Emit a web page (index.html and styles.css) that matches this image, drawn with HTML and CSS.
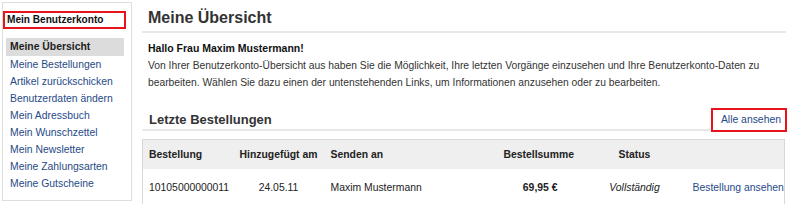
FILE: index.html
```html
<!DOCTYPE html>
<html lang="de">
<head>
    <meta charset="UTF-8">
    <title>Mein Benutzerkonto</title>
    <link rel="stylesheet" href="styles.css">
</head>
<body>

    <div class="page">
        <div class="sidebar">
            <div class="sidebar-title">Mein Benutzerkonto</div>
            <ul class="account-nav">
                <li class="active">Meine Übersicht</li>
                <li><a href="#">Meine Bestellungen</a></li>
                <li><a href="#">Artikel zurückschicken</a></li>
                <li><a href="#">Benutzerdaten ändern</a></li>
                <li><a href="#">Mein Adressbuch</a></li>
                <li><a href="#">Mein Wunschzettel</a></li>
                <li><a href="#">Mein Newsletter</a></li>
                <li><a href="#">Meine Zahlungsarten</a></li>
                <li><a href="#">Meine Gutscheine</a></li>
            </ul>
        </div>

        <div class="main">
            <h1>Meine Übersicht</h1>
            <div class="welcome">
                <strong>Hallo Frau Maxim Mustermann!</strong>
                <p>Von Ihrer Benutzerkonto-Übersicht aus haben Sie die Möglichkeit, Ihre letzten Vorgänge einzusehen und Ihre Benutzerkonto-Daten zu bearbeiten. Wählen Sie dazu einen der untenstehenden Links, um Informationen anzusehen oder zu bearbeiten.</p>
            </div>

            <div class="section-head">
                <h2>Letzte Bestellungen</h2>
                <a href="#" class="view-all">Alle ansehen</a>
            </div>

            <table class="orders">
                <colgroup>
                    <col style="width: 90px">
                    <col style="width: 92px">
                    <col style="width: 173px">
                    <col style="width: 89px">
                    <col style="width: 96px">
                    <col style="width: 102px">
                </colgroup>
                <thead>
                    <tr>
                        <th>Bestellung</th>
                        <th class="center">Hinzugefügt am</th>
                        <th>Senden an</th>
                        <th>Bestellsumme</th>
                        <th class="center">Status</th>
                        <th></th>
                    </tr>
                </thead>
                <tbody>
                    <tr>
                        <td>10105000000011</td>
                        <td class="center">24.05.11</td>
                        <td>Maxim Mustermann</td>
                        <td class="total">69,95 €</td>
                        <td class="status">Vollständig</td>
                        <td class="view"><a href="#">Bestellung ansehen</a></td>
                    </tr>
                </tbody>
            </table>
        </div>
    </div>

</body>
</html>
```

FILE: styles.css
```css
body {
    font-family: "Liberation Sans", Arial, sans-serif;
    font-size: 10.4px;
    color: #222;
    margin: 0;
    background-color: #fff;
}

a {
    color: #1f4a88;
    text-decoration: none;
}

.page {
    display: flex;
    gap: 10px;
    padding: 2px 0 0 2px;
}

.sidebar {
    width: 130px;
    height: 199px;
    border: 1px solid #dedede;
    box-sizing: border-box;
    flex-shrink: 0;
}

.sidebar-title {
    margin: 8px 5px 0 0;
    height: 18px;
    line-height: 14px;
    border: 2px solid #e8141b;
    box-sizing: border-box;
    padding-left: 2px;
    font-size: 10.1px;
    font-weight: bold;
    color: #111;
}

.account-nav {
    list-style: none;
    margin: 9px 0 0 0;
    padding: 0;
}

.account-nav li {
    margin: 0 7px 0 3px;
    padding-left: 4px;
    height: 17.15px;
    line-height: 17px;
}

.account-nav li.active {
    background-color: #dcdcdc;
    font-weight: bold;
    color: #222;
    height: 17.5px;
}

.main {
    width: 644px;
}

h1 {
    margin: 0;
    padding: 6px 0 3px 6px;
    font-size: 16px;
    line-height: 20px;
    color: #333;
    border-bottom: 2px solid #e8e8e8;
}

.welcome {
    padding: 7px 6px 0 6px;
    line-height: 17px;
}

.welcome strong {
    display: block;
    font-size: 10.5px;
    color: #111;
}

.welcome p {
    margin: 0;
    font-size: 10.3px;
    color: #333;
}

.section-head {
    display: flex;
    justify-content: space-between;
    align-items: flex-end;
    margin-top: 17px;
    border-bottom: 2px solid #e8e8e8;
    padding-left: 7px;
}

h2 {
    margin: 0;
    font-size: 13px;
    line-height: 18px;
    color: #333;
}

.view-all {
    position: relative;
    background-color: #fff;
    border: 2px solid #e8141b;
    padding: 0 4px 0 8px;
    line-height: 20px;
    margin: 0 -1px -3px 0;
    color: #1f4a88;
}

.orders {
    margin-top: 8px;
    width: 642px;
    table-layout: fixed;
    border-collapse: collapse;
    border: 1px solid #d8d8d8;
}

.orders th {
    background-color: #efefef;
    text-align: left;
    font-size: 10.4px;
    color: #222;
    height: 29px;
    padding: 0 6px;
    white-space: nowrap;
}

.orders td {
    height: 36px;
    padding: 0 6px;
    color: #222;
    white-space: nowrap;
}

.orders .center { text-align: center; }
.orders td.total { text-align: right; font-weight: bold; padding-right: 29px; }
.orders td.status { text-align: center; font-style: italic; }
.orders td.view { padding-left: 10px; padding-right: 0; }
```
